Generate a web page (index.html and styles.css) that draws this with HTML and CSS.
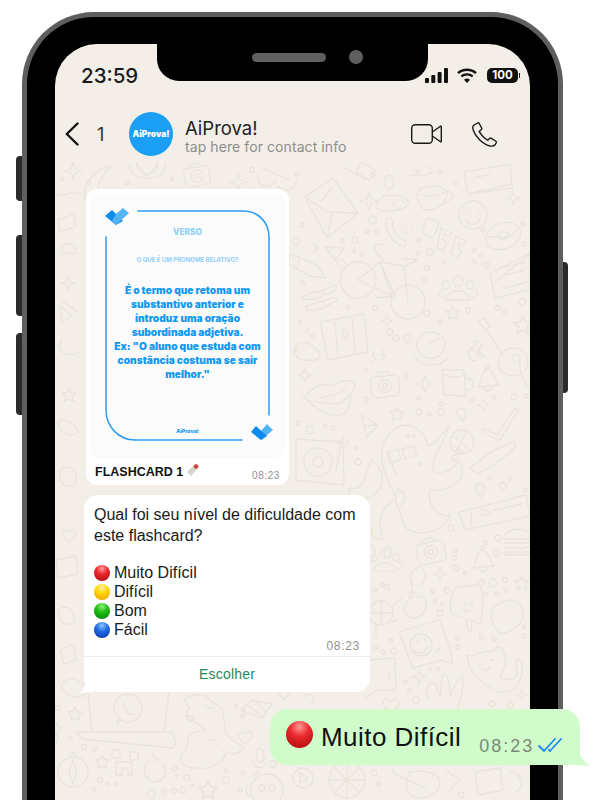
FILE: index.html
```html
<!DOCTYPE html>
<html lang="en">
<head>
  <meta charset="UTF-8" />
  <title>AiProva! chat</title>
  <link rel="stylesheet" href="styles.css">
</head>
<body>
  <div class="phone">
    <div class="side-btn side-mute"></div>
    <div class="side-btn side-up"></div>
    <div class="side-btn side-down"></div>
    <div class="side-btn side-power"></div>

    <div class="screen">
      <svg class="wallpaper" viewBox="55 44 475 756" width="475" height="756" fill="none" stroke="#e9e4da" stroke-width="1.3" stroke-linecap="round" stroke-linejoin="round">
        <defs>
          <path id="star4" d="M0-9 2-2 9 0 2 2 0 9-2 2-9 0-2-2Z"/>
          <path id="star5" d="M0-7 2-2.5 7-2 3.4 1.4 4.4 6.5 0 4-4.4 6.5-3.4 1.4-7-2-2-2.5Z"/>
          <path id="heart" d="M0 7C-8 2-9-2-7-5-5-7-2-6 0-3 2-6 5-7 7-5 9-2 8 2 0 7Z"/>
          <g id="camera"><rect x="-14" y="-10" width="28" height="21" rx="4"/><path d="M-8-10-6-14H4L6-10"/><circle r="6.5"/><circle r="2.5"/></g>
          <g id="people"><circle cy="-9" r="5"/><circle cx="-12" cy="-5" r="4"/><circle cx="12" cy="-5" r="4"/><path d="M-12 10C-12-2 12-2 12 10ZM-14 8C-22 8-20-1-15 0M14 8C22 8 20-1 15 0"/></g>
          <g id="bell"><path d="M-10 9C-6 4-8-6-1-9 6-9 6 2 11 7ZM-4 10C-2 14 3 14 4 10"/><circle cx="-1" cy="-11" r="2"/></g>
          <g id="burger"><path d="M-14-3C-14-16 14-16 14-3ZM-14 1H14M-14 5C-9 9-4 3 0 6 4 9 9 3 14 5M-13 10H13V13H-13Z"/></g>
        </defs>

        <!-- top strip -->
        <use href="#star4" x="73" y="171"/>
        <path d="M112 166C92 168 80 190 86 200M112 166C100 176 96 186 98 200"/>
        <use href="#heart" transform="translate(147 166) scale(1.3)"/>
        <path d="M130 165C128 175 140 178 147 178 156 178 168 174 165 164"/>
        <use href="#camera" transform="translate(197 176) rotate(-10) scale(.9)"/>
        <use href="#star4" x="238" y="182"/>
        <path d="M262 168 290 180M258 176C256 188 272 190 276 180M278 186C284 194 296 190 296 180"/>
        <path d="M345 168 366 180M362 162 375 170 369 180 356 172ZM425 166C445 172 420 178 410 175"/>
        <!-- envelope -->
        <path d="M305 197 333 178 358 213 327 238ZM305 197 327 212 358 213M327 238 332 212M321 202 332 188"/>
        <use href="#star4" x="369" y="201"/>
        <ellipse cx="389" cy="182" rx="5" ry="7"/>
        <path d="M376 208C376 192 400 192 409 202 406 212 392 211 382 211Z"/>
        <use href="#heart" transform="translate(398 204) scale(.7)"/>
        <!-- cup -->
        <path d="M417 194C420 184 442 184 447 192 447 204 436 210 429 210 422 210 417 204 417 194ZM447 192C456 190 454 202 444 203M419 194C428 198 438 196 446 192"/>
        <!-- notebook -->
        <path d="M464 172 510 164 512 184 468 194ZM468 194 512 188 513 184M474 178 490 174"/>
        <use href="#star4" transform="translate(513 198) scale(.8)"/>
        <!-- emoji -->
        <circle cx="473" cy="215" r="14"/>
        <path d="M466 221C470 226 477 226 481 218"/>
        <use href="#heart" transform="translate(467 212) scale(.45)"/>
        <use href="#heart" transform="translate(479 210) scale(.45)"/>
        <!-- donut -->
        <ellipse cx="503" cy="236" rx="18" ry="13" transform="rotate(-20 503 236)"/>
        <ellipse cx="503" cy="235" rx="5" ry="3" transform="rotate(-20 503 235)"/>
        <path d="M487 236C494 240 496 232 502 240 508 236 512 238 519 226"/>
        <!-- handset and heart -->
        <path d="M387 218C383 226 392 244 404 247 408 244 406 240 401 239 396 238 394 228 392 226 394 222 391 216 387 218Z"/>
        <use href="#heart" transform="translate(407 228) scale(.7)"/>
        <!-- BFF tiles -->
        <rect x="424" y="219" width="13" height="17" rx="3" transform="rotate(20 430 227)"/>
        <path d="M441 228 452 233 449 236 444 234 442 240 447 242 443 251 437 248Z"/>
        <path d="M456 236 466 241 464 245 459 243 458 248 462 250 458 258 451 254Z"/>
        <!-- pencil -->
        <path d="M290 254 317 265 326 278 310 276 288 264ZM300 258 296 270"/>
        <path d="M314 243C312 246 316 248 318 246 318 250 314 253 312 252"/>
        <path d="M325 247 344 248 335 260Z"/>
        <!-- bike -->
        <circle cx="358" cy="280" r="18"/><circle cx="408" cy="302" r="17"/>
        <path d="M358 280 380 262 404 266 408 302M380 262 392 296 358 280M376 245C372 250 380 255 384 262M376 245 382 244M404 266C412 264 418 260 417 259L403 259M380 262 395 296 376 298"/>
        <!-- people -->
        <use href="#people" transform="translate(458 290)"/>
        <!-- news -->
        <path d="M495 282 530 254M490 274 530 253V290L495 298ZM500 268 525 262M502 276 525 270M505 288 528 282"/>
        <!-- clouds -->
        <path d="M302 296C308 298 312 290 318 292 328 290 332 284 336 286 338 290 330 294 324 294 318 302 310 298 302 300ZM306 306C312 306 318 300 322 302 330 298 336 296 338 299 338 302 330 304 326 306 320 312 312 308 306 311Z"/>
        <!-- map -->
        <path d="M320 322 364 314 368 352 328 360ZM335 322 338 356M352 318 355 354"/>
        <path d="M344 329C340 333 344 338 345 340 347 338 350 333 344 329Z"/>
        <use href="#star4" transform="translate(387 321) scale(.7)"/>
        <use href="#star5" transform="translate(453 313)"/>
        <use href="#star5" transform="translate(523 325) scale(1.3)"/>
        <!-- bird blob -->
        <ellipse cx="431" cy="345" rx="14" ry="13"/><path d="M413 355C423 370 440 366 448 358M428 345 438 338"/>
        <path d="M375 352C371 354 373 358 376 358 376 360 373 362 371 362M384 350C380 352 382 356 385 356 385 358 382 360 380 360"/>
        <path d="M296 345C290 355 300 362 310 360 322 362 322 350 316 350 314 344 304 340 296 345Z"/>
        <path d="M480 350C474 354 480 362 484 356M470 350C465 356 472 362 476 360"/>
        <!-- guitar -->
        <path d="M478 322 486 330 504 356M478 322 484 318 490 326 486 330"/>
        <ellipse cx="513" cy="362" rx="15" ry="14"/>
        <circle cx="516" cy="358" r="4"/>
        <path d="M475 340 483 345 478 349 484 357 470 348 476 346Z"/>

        <!-- lips, camera, mug, bell -->
        <path d="M303 398C316 385 322 382 332 386 345 378 354 380 355 384 354 396 340 404 336 404 326 402 316 404 303 398ZM306 399C316 410 334 420 345 413 350 405 352 398 350 394M320 398C330 396 340 394 348 388"/>
        <use href="#star4" transform="translate(305 375) scale(.8)"/>
        <use href="#camera" transform="translate(385 386) rotate(-6)"/>
        <use href="#star4" transform="translate(425 384)"/>
        <path d="M442 370 464 370 466 396 444 395ZM442 374C450 378 458 378 466 374M466 378C478 378 474 392 466 390"/>
        <use href="#bell" transform="translate(488 378)"/>
        <path d="M520 360C518 370 524 385 530 388"/>
        <!-- plane, pin, check -->
        <path d="M361 415 378 425 367 437ZM361 415 364 426 378 425"/>
        <use href="#star5" transform="translate(397 414)"/>
        <use href="#star4" transform="translate(483 405) scale(.7)"/>
        <path d="M459 408C452 412 462 420 463 421 466 416 467 408 459 408ZM483 428 497 435 515 408 519 409 500 440 483 433Z"/>
        <!-- octopus -->
        <path d="M382 448C386 432 400 421 414 427 424 432 426 440 428 446 434 444 445 432 449 425 447 440 432 455 432 470 440 476 447 470 450 470 458 462 462 458 462 472 462 484 445 492 430 490 426 510 446 520 450 514 448 532 412 540 404 525 400 510 392 500 398 490 408 492 404 502 400 506 M382 448C380 468 388 480 396 498 384 505 376 520 382 535M388 450 396 476"/>
        <path d="M387 453 398 449 401 459 390 463ZM402 449 414 446 417 455 405 459Z"/>
        <path d="M372 460C364 472 366 492 350 488 345 500 362 502 375 494 384 486 386 470 372 460Z"/>
        <path d="M370 520C358 518 365 530 372 528 370 538 378 542 384 538"/>
        <circle cx="408" cy="436" r="1.5"/><circle cx="414" cy="436" r="1.5"/><circle cx="420" cy="464" r="1.8"/>
        <!-- turntable -->
        <path d="M296 439 343 442 344 485 296 480ZM340 450 336 470"/>
        <circle cx="318" cy="462" r="14"/><circle cx="318" cy="462" r="5"/>
        <use href="#star5" transform="translate(343 443) scale(.9)"/>
        <!-- ball, shoe -->
        <circle cx="462" cy="442" r="12"/><path d="M452 436C460 440 466 444 470 452M456 452C460 444 464 438 466 431M451 445C458 448 464 452 464 454"/>
        <path d="M470 467C482 462 488 450 502 447 513 441 516 442 515 447 508 456 492 466 478 474ZM478 474 472 470"/>
        <path d="M477 484C472 488 480 496 481 497 486 490 486 483 477 484Z"/>
        <!-- voice note -->
        <path d="M459 512 526 495 530 516 465 530ZM471 512C472 520 470 524 472 526M482 508 490 513 482 516ZM494 510 522 504"/>
        <use href="#burger" transform="translate(518 542)"/>
        <use href="#camera" transform="translate(431 552) rotate(-12)"/>
        <use href="#people" transform="translate(385 562) scale(.9)"/>
        <use href="#bell" transform="translate(483 559)"/>
        <ellipse cx="371" cy="552" rx="4" ry="6"/><ellipse cx="388" cy="552" rx="4" ry="6"/>

        <!-- plant, popsicle, blob -->
        <path d="M413 585C407 570 415 573 412 572 418 570 418 560 426 574 424 584 420 588 413 585ZM411 598C404 590 418 590 418 598 430 590 428 618 415 618 405 618 398 610 411 598ZM411 582 413 598"/>
        <use href="#star4" transform="translate(440 574) scale(.8)"/>
        <path d="M456 587 478 585C486 590 482 610 481 624L452 614C448 602 452 592 456 587ZM466 620 468 632 471 632 472 622"/>
        <path d="M464 601 467 604 463 606M474 600 470 604 474 606M464 609C466 614 469 612 470 610"/>
        <path d="M494 605C500 606 500 600 510 600 520 600 525 610 522 620 518 628 505 636 498 632 492 625 488 616 494 605Z"/>
        <use href="#star5" transform="translate(522 583)"/>
        <!-- turtle -->
        <circle cx="381" cy="613" r="12"/><path d="M392 607 402 597M390 622 398 620M376 625 376 636M372 621 364 628M381 601 381 625M370 613H393"/>
        <!-- emoji bubble -->
        <path d="M399 632 440 620 451 652 452 664 442 660 413 668ZM436 652C438 650 440 650 440 648"/>
        <circle cx="421" cy="645" r="11"/><path d="M413 650C418 656 425 654 428 645M416 642 419 640M424 638 426 642"/>
        <path d="M456 636C454 640 458 642 459 640 459 638 458 637 456 636ZM480 634C478 638 482 642 483 640 484 638 482 636 480 634ZM493 636C491 640 495 642 496 640 497 638 495 637 493 636Z"/>
        <use href="#star4" transform="translate(419 677) scale(.8)"/>
        <!-- cat -->
        <path d="M467 655 472 656C478 652 488 652 496 650 494 646 502 646 503 650 508 660 505 670 500 676 508 682 516 680 518 672 514 664 516 654 522 662 524 676 518 692 505 692 498 694 490 688 482 682 476 675 469 672 467 655Z"/>
        <path d="M478 664 482 664M490 660 494 660M482 668C484 672 488 672 490 667"/>
        <!-- hand -->
        <path d="M428 700C424 685 430 680 436 684 438 690 438 694 440 696 442 690 440 676 444 674 450 676 450 690 450 696 452 690 460 674 462 676 466 684 460 700 458 708"/>
        <!-- below the text bubble -->
        <path d="M371 660 395 658 396 690 376 690 366 698M389 672V682"/>
        <use href="#heart" transform="translate(391 705)"/>
        <use href="#star4" transform="translate(522 695) scale(.6)"/>

        <!-- bottom left -->
        <path d="M61 687C68 672 80 680 90 690 84 698 70 702 61 687Z"/>
        <use href="#star5" transform="translate(75 714)"/>
        <path d="M55 722 60 728 55 735 59 736 55 745"/>
        <path d="M88 692 92 732H164L169 692M76 732H172L176 742 173 748 82 739Z"/>
        <circle cx="128" cy="708" r="14"/><path d="M122 719 117 724 119 716M124 702C122 708 128 716 135 714"/>
        <path d="M190 708C182 700 184 696 188 698 192 694 200 694 206 696L212 702 222 708 226 735 244 748C238 756 230 754 226 752 224 766 205 770 195 768 180 768 176 755 186 752 184 746 190 745 188 740 190 730 196 734 205 730 200 722 188 722 186 714ZM186 716 194 716C193 722 187 723 186 716ZM208 740C214 738 218 742 216 746M205 705C208 710 214 708 214 708"/>
        <circle cx="73" cy="772" r="15"/><path d="M73 760 77 772 73 784 69 772ZM69 757A3 3 0 0 1 77 757"/>
        <path d="M112 750H120V758H112ZM130 752H138V760H130ZM116 762H132V775H128V768H122V775H116Z"/>
        <use href="#star5" transform="translate(102 762)"/>
        <path d="M150 760C140 765 144 782 155 782 166 780 168 770 162 764M152 754 158 760 150 764"/>
        <use href="#star5" transform="translate(208 790) scale(1.3)"/>
        <use href="#heart" transform="translate(245 737) scale(.9)"/>
        <path d="M258 748C254 752 258 764 262 762 266 760 264 748 258 748ZM252 760C254 768 262 770 266 764M258 770 258 774 254 775"/>
        <path d="M240 710 252 700 272 704 262 718ZM246 704 262 716M256 702 266 712"/>
        <circle cx="267" cy="790" r="16"/><circle cx="262" cy="788" r="3"/><circle cx="272" cy="788" r="3"/><path d="M248 785C243 790 248 798 252 796"/>

        <!-- below and above the green bubble -->
        <circle cx="303" cy="778" r="10"/><path d="M300 773 308 778 300 783Z"/>
        <circle cx="347" cy="780" r="18"/><path d="M347 762V798M329 780H365M335 768 359 792M359 768 335 792"/>
        <path d="M392 770C394 778 420 782 426 790M410 772C420 770 440 772 440 782 440 792 430 798 420 798 410 798 402 790 410 772Z"/>
        <path d="M445 770 460 780 450 790"/>
        <path d="M475 772 500 768 503 790 478 795ZM510 772C520 770 526 786 516 792"/>
        <path d="M276 690 292 690 284 700ZM304 696C312 690 318 700 310 704"/>

        <!-- left strip -->
        <path d="M58 195C66 196 70 190 78 194M58 220 74 214 76 226 60 232ZM66 244C58 250 62 256 70 252 78 258 78 246 72 244Z"/>
        <use href="#star4" transform="translate(68 283) scale(.8)"/>
        <path d="M60 300 78 312M60 306 72 316 62 322ZM62 340C54 350 68 360 78 352"/>
        <use href="#star5" transform="translate(69 395)"/>
        <path d="M58 422C62 416 76 424 78 432 70 438 60 434 58 422ZM60 470C72 462 78 472 76 484 66 490 58 484 60 470Z"/>
        <use href="#heart" transform="translate(69 535) scale(.9)"/>
        <path d="M56 560 76 556 78 574 58 578ZM58 610C68 602 76 612 74 622 66 628 58 622 58 610ZM60 650 74 644 76 660 64 664Z"/>

        <!-- dots -->
        <g>
          <circle cx="89" cy="182" r="2"/><circle cx="127" cy="183" r="2"/><circle cx="172" cy="179" r="1.5"/><circle cx="252" cy="170" r="2.5"/><circle cx="62" cy="179" r="1.5"/>
          <circle cx="297" cy="174" r="2"/><circle cx="373" cy="175" r="2"/><circle cx="418" cy="172" r="2"/><circle cx="440" cy="172" r="2"/><circle cx="456" cy="184" r="1.5"/>
          <circle cx="296" cy="241" r="3.5"/><circle cx="302" cy="225" r="2"/><circle cx="342" cy="241" r="2"/><circle cx="355" cy="240" r="3"/><circle cx="367" cy="231" r="2"/><circle cx="376" cy="232" r="2"/><circle cx="373" cy="220" r="4"/>
          <circle cx="354" cy="251" r="1.5"/><circle cx="362" cy="254" r="2"/><circle cx="341" cy="263" r="3.5"/><circle cx="419" cy="240" r="2"/><circle cx="418" cy="253" r="2"/><circle cx="430" cy="252" r="3.5"/><circle cx="444" cy="263" r="1.5"/><circle cx="427" cy="268" r="2.5"/><circle cx="424" cy="280" r="2.5"/>
          <circle cx="474" cy="250" r="2"/><circle cx="474" cy="262" r="2"/><circle cx="487" cy="265" r="2.5"/><circle cx="480" cy="256" r="1.5"/><circle cx="483" cy="230" r="2"/><circle cx="523" cy="224" r="2"/><circle cx="524" cy="244" r="2"/><circle cx="522" cy="302" r="3.5"/>
          <circle cx="303" cy="283" r="2"/><circle cx="348" cy="307" r="2"/><circle cx="375" cy="308" r="2.5"/><circle cx="407" cy="338" r="3.5"/><circle cx="396" cy="338" r="3"/><circle cx="427" cy="313" r="3"/><circle cx="440" cy="322" r="2"/><circle cx="468" cy="310" r="2.5"/><circle cx="498" cy="308" r="2.5"/><circle cx="505" cy="312" r="2"/>
          <circle cx="312" cy="336" r="2"/><circle cx="300" cy="322" r="1.5"/><circle cx="307" cy="331" r="1.5"/><circle cx="390" cy="332" r="3"/><circle cx="296" cy="350" r="1.5"/>
          <circle cx="366" cy="370" r="2"/><circle cx="406" cy="376" r="2"/><circle cx="366" cy="400" r="2.5"/><circle cx="419" cy="398" r="2"/><circle cx="419" cy="412" r="3"/><circle cx="429" cy="414" r="2"/><circle cx="441" cy="412" r="3.5"/><circle cx="441" cy="404" r="2"/><circle cx="472" cy="400" r="2"/><circle cx="494" cy="397" r="2"/><circle cx="514" cy="397" r="3"/><circle cx="526" cy="396" r="2"/>
          <circle cx="298" cy="423" r="2"/><circle cx="310" cy="430" r="4"/><circle cx="325" cy="426" r="1.5"/><circle cx="333" cy="428" r="2"/><circle cx="357" cy="448" r="1.5"/><circle cx="358" cy="462" r="3"/><circle cx="455" cy="458" r="3"/>
          <circle cx="490" cy="478" r="2"/><circle cx="503" cy="486" r="3.5"/><circle cx="510" cy="478" r="2"/><circle cx="525" cy="490" r="2"/><circle cx="451" cy="528" r="3"/><circle cx="498" cy="538" r="3"/><circle cx="485" cy="543" r="2"/><circle cx="496" cy="553" r="3"/><circle cx="455" cy="551" r="2"/><circle cx="455" cy="558" r="2"/><circle cx="456" cy="568" r="3"/><circle cx="465" cy="573" r="1.5"/>
          <circle cx="375" cy="590" r="2"/><circle cx="387" cy="587" r="2.5"/><circle cx="382" cy="585" r="2"/><circle cx="433" cy="591" r="2"/><circle cx="447" cy="590" r="2.5"/><circle cx="435" cy="601" r="1.5"/><circle cx="442" cy="604" r="1.5"/><circle cx="440" cy="613" r="3"/>
          <circle cx="481" cy="583" r="3"/><circle cx="493" cy="583" r="4"/><circle cx="505" cy="580" r="2.5"/><circle cx="486" cy="594" r="1.5"/><circle cx="497" cy="594" r="2"/><circle cx="506" cy="590" r="2"/><circle cx="524" cy="627" r="1.5"/><circle cx="524" cy="636" r="2"/>
          <circle cx="376" cy="647" r="2"/><circle cx="391" cy="641" r="2"/><circle cx="383" cy="652" r="2"/><circle cx="394" cy="651" r="3"/><circle cx="458" cy="647" r="2"/><circle cx="430" cy="669" r="1.5"/><circle cx="438" cy="669" r="1.5"/><circle cx="405" cy="682" r="2"/><circle cx="409" cy="691" r="2"/><circle cx="416" cy="700" r="3.5"/><circle cx="492" cy="704" r="3"/><circle cx="510" cy="705" r="3"/>
          <circle cx="58" cy="708" r="2.5"/><circle cx="70" cy="738" r="2"/><circle cx="84" cy="747" r="2.5"/><circle cx="95" cy="749" r="2"/><circle cx="175" cy="768" r="2.5"/><circle cx="177" cy="776" r="1.5"/><circle cx="187" cy="778" r="3"/><circle cx="192" cy="786" r="1.5"/><circle cx="100" cy="780" r="2.5"/><circle cx="107" cy="784" r="1.5"/><circle cx="117" cy="784" r="1.5"/><circle cx="94" cy="789" r="2"/><circle cx="151" cy="794" r="4"/><circle cx="164" cy="792" r="2.5"/><circle cx="174" cy="791" r="2.5"/><circle cx="183" cy="790" r="3"/>
          <circle cx="226" cy="771" r="2"/><circle cx="226" cy="780" r="3.5"/><circle cx="273" cy="764" r="3.5"/><circle cx="243" cy="773" r="2"/><circle cx="240" cy="790" r="2"/><circle cx="244" cy="710" r="1.5"/><circle cx="236" cy="706" r="1.5"/><circle cx="243" cy="716" r="2"/>
          <circle cx="374" cy="773" r="3"/><circle cx="379" cy="784" r="2"/><circle cx="461" cy="795" r="3"/>
        </g>
      </svg>

      <div class="status-bar">
        <span class="clock">23:59</span>
        <div class="status-icons">
          <svg width="23" height="15" viewBox="0 0 23 15" fill="#111"><rect x="0" y="10" width="4" height="5" rx="1"/><rect x="6.3" y="7" width="4" height="8" rx="1"/><rect x="12.6" y="4" width="4" height="11" rx="1"/><rect x="19" y="0" width="4" height="15" rx="1"/></svg>
          <svg class="wifi" width="20" height="15" viewBox="0 0 20 15" fill="none" stroke="#111" stroke-width="2.3"><path d="M1 5.2C6 .6 14 .6 19 5.2"/><path d="M4.3 8.300C7.500 5.600 12.500 5.600 15.700 8.300"/><path d="M10 15 7 11.800C9 10.200 11 10.200 13 11.800Z" fill="#111" stroke="none"/></svg>
          <div class="battery"><span class="battery-level">100</span><span class="battery-nub"></span></div>
        </div>
      </div>

      <div class="notch">
        <div class="speaker"></div>
        <div class="lens"></div>
      </div>

      <header class="chat-header">
        <svg class="back" width="14" height="24" viewBox="0 0 14 24" fill="none" stroke="#111" stroke-width="2.4" stroke-linecap="round" stroke-linejoin="round"><path d="M12.500 1.500 1.800 12 12.500 22.500"/></svg>
        <span class="unread">1</span>
        <div class="avatar">AiProva!</div>
        <div class="contact">
          <div class="contact-name">AiProva!</div>
          <div class="contact-hint">tap here for contact info</div>
        </div>
        <svg class="icon-video" width="31" height="20" viewBox="0 0 31 20" fill="none" stroke="#1a1a1a" stroke-width="1.4" stroke-linejoin="round"><rect x=".7" y=".7" width="20.6" height="18.6" rx="3.5"/><path d="M21.300 8 29.500 2.200C30 2 30.300 2.200 30.300 2.800V17.200C30.300 17.800 30 18 29.500 17.800L21.300 12"/></svg>
        <svg class="icon-call" width="25" height="25" viewBox="0 0 25 25" fill="none" stroke="#1a1a1a" stroke-width="1.4" stroke-linejoin="round"><path d="M5.600 1 2 3C.6 4 .6 6 1.200 8 3 14 10 22 18 24 20 24.400 22 24 23.300 22.500L24.200 20.800C24.500 20 24.200 19.400 23.600 19L19.300 16.300C18.600 15.900 18 16 17.500 16.500L15.800 18.200C13 17 8.500 12.300 7.200 9.400L9.200 7.800C9.800 7.300 9.900 6.600 9.600 6L7.300 1.500C6.900.8 6.200.7 5.600 1Z"/></svg>
      </header>

      <main class="chat">
        <div class="bubble-card">
          <div class="card-art">
            <svg class="card-frame" width="195" height="265" viewBox="0 0 195 265" fill="none">
              <path d="M48 18H153C168 18 179 29 179 44V222M16 44V217C16 234 29 247 45 247H152" stroke="#2b9cf0" stroke-width="1.5" stroke-linecap="round"/>
              <path d="M15 23 22 17 33 28 26 32Z" fill="#0b8cee"/>
              <path d="M26 21 33 15 39 20 26 32 22 28Z" fill="#54b4f3"/>
              <path d="M171 238 177 231 183 237 171 247 166 243Z" fill="#54b4f3"/>
              <path d="M161 239 166 233 177 243 171 247Z" fill="#0b8cee"/>
            </svg>
            <div class="card-title">VERSO</div>
            <div class="card-question">O QUE É UM PRONOME RELATIVO?</div>
            <div class="card-answer">É o termo que retoma um substantivo anterior e introduz uma oração subordinada adjetiva.<br>Ex: "O aluno que estuda com constância costuma se sair melhor."</div>
            <div class="card-brand">AiProva!</div>
          </div>
          <div class="card-foot">
            <span class="card-caption">FLASHCARD 1</span>
            <svg class="pin" width="14" height="14" viewBox="0 0 14 14"><path d="M1 9 8 2 12 5 5 13Z" fill="#d9d4cd"/><path d="M9 1 13 4" stroke="#b9b4ad"/><circle cx="10" cy="3.5" r="2.2" fill="#d4423f"/></svg>
            <span class="time">08:23</span>
          </div>
        </div>

        <div class="bubble-in">
          <div class="question">Qual foi seu nível de dificuldade com este flashcard?</div>
          <ul class="options">
            <li><span class="dot dot-red"></span>Muito Difícil</li>
            <li><span class="dot dot-yellow"></span>Difícil</li>
            <li><span class="dot dot-green"></span>Bom</li>
            <li><span class="dot dot-blue"></span>Fácil</li>
          </ul>
          <div class="time time-in">08:23</div>
          <div class="choose">Escolher</div>
          <svg class="tail-in" width="14" height="10" viewBox="0 0 14 10"><path d="M6 0C6 4 4 8 0 9.5 5 10 10 10 14 9V0Z" fill="#fff"/></svg>
        </div>

        <div class="bubble-out">
          <span class="dot dot-red dot-big"></span>
          <span class="out-text">Muito Difícil</span>
          <span class="out-time">08:23</span>
          <svg class="out-check" width="24" height="16" viewBox="0 0 24 16" fill="none" stroke="#1f8af0" stroke-width="1.8" stroke-linecap="round" stroke-linejoin="round"><path d="M1 9 6 14 17 2M11 13 12 14 23 2"/></svg>
          <svg class="tail-out" width="22" height="20" viewBox="0 0 22 20"><path d="M0 0H8C8 8 14 17 20 19.5 13 20 5 19 0 17Z" fill="#d0fbcb"/></svg>
        </div>
      </main>
    </div>
  </div>
</body>
</html>
```

FILE: styles.css
```css
html, body {
  margin: 0;
  padding: 0;
  height: 100%;
  background: #fff;
  overflow: hidden;
  font-family: "Liberation Sans", Arial, sans-serif;
  color: #111;
}

.phone {
  position: relative;
  box-sizing: border-box;
  width: 541px;
  height: 788px;
  margin: 12px 0 0 22px;
  padding: 27px 28px 0;
  background: #000;
  border: 5px solid #5e5e5e;
  border-bottom: 0;
  border-radius: 72px 72px 0 0;
}

.side-btn {
  position: absolute;
  width: 6px;
  background: #2b2b2b;
}

.side-mute, .side-up, .side-down {
  left: -11px;
  border-radius: 4px 0 0 4px;
}

.side-mute { top: 139px; height: 45px; }
.side-up { top: 218px; height: 81px; }
.side-down { top: 316px; height: 82px; }

.side-power {
  right: -10px;
  top: 245px;
  width: 5px;
  height: 131px;
  border-radius: 0 4px 4px 0;
}

.screen {
  position: relative;
  width: 475px;
  height: 756px;
  background: #f3efe8;
  border-radius: 42px 42px 0 0;
}

.wallpaper {
  position: absolute;
  left: 0;
  top: 0;
}

.status-bar {
  position: relative;
  display: flex;
  align-items: center;
  justify-content: space-between;
  height: 62px;
  padding: 0 10px 0 26px;
}

.clock {
  font-family: Inter, sans-serif;
  font-size: 20.5px;
  font-weight: 500;
  padding-top: 1px;
  color: #1a1a1a;
}

.status-icons {
  display: flex;
  align-items: center;
  gap: 10px;
}

.wifi { margin-left: -1px; }

.battery {
  display: flex;
  align-items: center;
  gap: 1px;
}

.battery-level {
  width: 31px;
  height: 15px;
  background: #111;
  border-radius: 5px;
  color: #fff;
  font-family: Inter, sans-serif;
  font-size: 11.5px;
  font-weight: 700;
  line-height: 15px;
  text-align: center;
}

.battery-nub {
  width: 1px;
  height: 5px;
  background: #111;
}

.notch {
  position: absolute;
  left: 102px;
  top: 0;
  width: 271px;
  height: 37px;
  background: #000;
  border-radius: 0 0 22px 22px;
}

.speaker {
  position: absolute;
  left: 95px;
  top: 9px;
  width: 74px;
  height: 9px;
  border-radius: 5px;
  background: #5f5f5f;
}

.lens {
  position: absolute;
  left: 192px;
  top: 6px;
  width: 14px;
  height: 14px;
  border-radius: 50%;
  background: #5f5f5f;
}

.chat-header {
  position: relative;
  display: flex;
  align-items: center;
  height: 56px;
  background: #f3efe8;
  padding-left: 10px;
}

.back { flex: none; }

.unread {
  margin-left: 18px;
  width: 32px;
  font-family: Inter, sans-serif;
  font-size: 18px;
  color: #333;
}

.avatar {
  flex: none;
  width: 44px;
  height: 44px;
  margin-right: 12px;
  border-radius: 50%;
  background: #1a9ff5;
  color: #fff;
  font-family: Inter, sans-serif;
  font-size: 8.5px;
  font-weight: 900;
  line-height: 44px;
  text-align: center;
}

.contact {
  width: 226px;
  padding-top: 5px;
  font-family: Inter, sans-serif;
}

.contact-name {
  font-size: 18.5px;
  font-weight: 400;
  line-height: 20px;
  color: #222;
}

.contact-hint {
  font-size: 14px;
  line-height: 18px;
  color: #8d8d8d;
  letter-spacing: .08px;
}

.icon-call { margin-left: 30px; }

.chat {
  position: relative;
  display: flex;
  flex-direction: column;
  align-items: flex-start;
  padding: 27px 0 0 31px;
}

.bubble-card {
  box-sizing: border-box;
  width: 203px;
  padding: 4px 4px 0;
  background: #fff;
  border-radius: 11px;
}

.card-art {
  position: relative;
  box-sizing: border-box;
  width: 195px;
  height: 265px;
  padding-top: 34px;
  background: #fbfbfb;
  border-radius: 10px;
  text-align: center;
  font-family: Inter, sans-serif;
  overflow: hidden;
}

.card-frame {
  position: absolute;
  left: 0;
  top: 0;
}

.card-title {
  font-size: 8.3px;
  font-weight: 800;
  line-height: 10px;
  color: #8fd0fb;
}

.card-question {
  margin-top: 18px;
  font-size: 6px;
  font-weight: 700;
  line-height: 10px;
  color: #8fd0fb;
}

.card-answer {
  margin: 18px auto 0;
  width: 150px;
  font-size: 10.2px;
  font-weight: 900;
  line-height: 14px;
  color: #1199f3;
}

.card-brand {
  position: absolute;
  left: 0;
  right: 0;
  top: 235px;
  font-size: 5.3px;
  font-weight: 800;
  color: #1199f3;
}

.card-foot {
  display: flex;
  align-items: center;
  height: 27px;
  padding: 0 5px;
}

.card-caption {
  font-size: 12.5px;
  font-weight: 700;
  color: #111;
}

.pin {
  margin: -4px 0 0 3px;
}

.time {
  font-size: 10px;
  letter-spacing: .6px;
  color: #8f8f8f;
}

.card-foot .time {
  margin: 8px 0 0 auto;
}

.bubble-in {
  position: relative;
  box-sizing: border-box;
  width: 286px;
  margin: 10px 0 0 -2px;
  padding-top: 10px;
  background: #fff;
  border-radius: 14px;
  font-size: 16px;
}

.question {
  padding: 0 10px;
  line-height: 20.5px;
  color: #1a1a1a;
}

.options {
  margin: 17px 0 0;
  padding: 0 10px;
  list-style: none;
  line-height: 19px;
  color: #1a1a1a;
}

.options li {
  display: flex;
  align-items: center;
}

.dot {
  flex: none;
  width: 16px;
  height: 16px;
  margin-right: 4px;
  border-radius: 50%;
}

.dot-red { background: radial-gradient(circle at 50% 22%, #ff9a9a 0, #ea2a2e 38%, #b80f12 85%); }
.dot-yellow { background: radial-gradient(circle at 50% 22%, #fff2a0 0, #ffd400 42%, #f0a400 90%); }
.dot-green { background: radial-gradient(circle at 50% 22%, #8cf07e 0, #1fbe13 40%, #078a06 88%); }
.dot-blue { background: radial-gradient(circle at 50% 22%, #8cc4ff 0, #1d69e0 42%, #0a3aa8 90%); }

.time-in {
  padding: 0 10px;
  font-size: 12px;
  line-height: 14px;
  letter-spacing: .7px;
  text-align: right;
}

.choose {
  margin-top: 3px;
  height: 35px;
  border-top: 1px solid #ececec;
  line-height: 35px;
  text-align: center;
  font-size: 14px;
  letter-spacing: .2px;
  color: #1f8a5b;
}

.tail-in {
  position: absolute;
  left: -5px;
  bottom: -1px;
}

.bubble-out {
  position: relative;
  display: flex;
  align-items: center;
  align-self: flex-end;
  box-sizing: border-box;
  width: 310px;
  height: 56px;
  margin: 17px -50px 0 0;
  padding-left: 16px;
  background: #d0fbcb;
  border-radius: 18px 18px 8px 18px;
}

.dot-big {
  width: 27px;
  height: 27px;
  margin: -5px 8px 0 0;
}

.out-text {
  font-size: 26px;
  letter-spacing: .45px;
  color: #111;
}

.out-time {
  margin: 18px 4px 0 18px;
  font-size: 18px;
  letter-spacing: 2px;
  color: #7b8a78;
}

.out-check {
  margin-top: 16px;
}

.tail-out {
  position: absolute;
  right: -12px;
  bottom: -1px;
}
```
